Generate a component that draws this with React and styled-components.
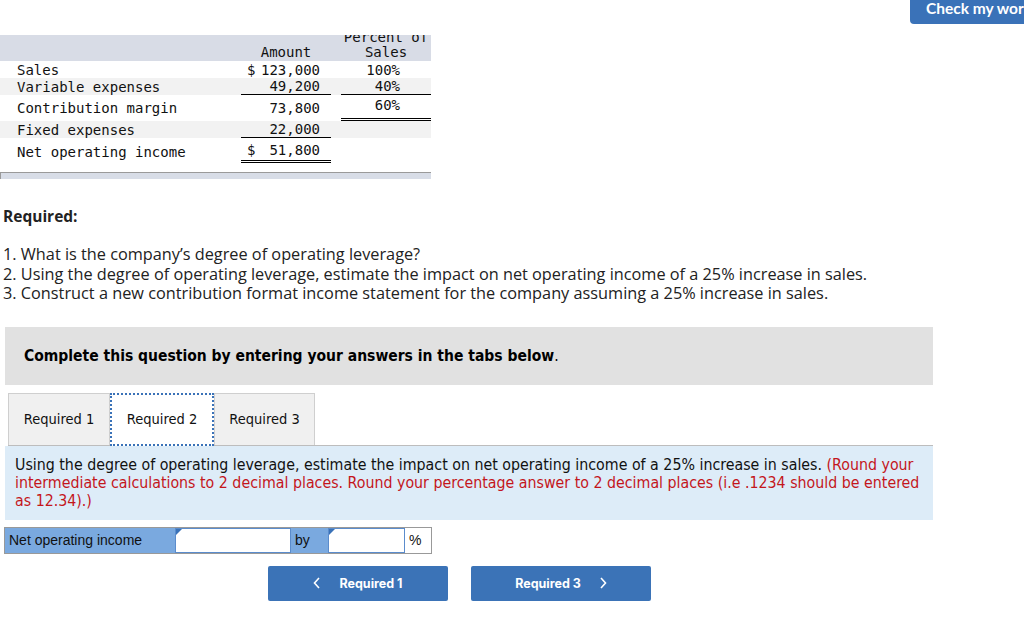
import React from "react"
import styled, { createGlobalStyle } from "styled-components"

const Global = createGlobalStyle`
  body {
    margin: 0;
    background: #fff;
    font-family: "Open Sans", "Liberation Sans", sans-serif;
    color: #222;
  }
`

const Page = styled.div`
  position: relative;
  width: 1024px;
  height: 617px;
  overflow: hidden;
`

const CheckButton = styled.button`
  position: absolute;
  top: -8px;
  left: 910px;
  width: 140px;
  height: 32px;
  border: none;
  border-radius: 4px;
  background: #3a72b8;
  color: #fff;
  font-family: Lato, "Liberation Sans", sans-serif;
  font-weight: 700;
  font-size: 15.5px;
  text-align: left;
  padding: 0 0 0 16px;
  white-space: nowrap;
`

const TableClip = styled.div`
  margin-top: 35px;
  width: 431px;
  overflow: hidden;
  font-family: "DejaVu Sans Mono", monospace;
  font-size: 14px;
  color: #111;
`

const Row = styled.div`
  display: grid;
  grid-template-columns: 241px 90px 10px 90px;
  height: ${p => p.h}px;
  background: ${p => (p.shade ? "#f2f2f2" : "#fff")};
`

const HeadRow = styled(Row)`
  margin-top: -8px;
  background: #d8dce6;
`

const HeadCell = styled.div`
  display: flex;
  flex-direction: column;
  justify-content: flex-end;
  align-items: center;
  line-height: 15px;
  padding-bottom: 1px;
`

const Label = styled.div`
  display: flex;
  align-items: center;
  padding-left: 17px;
  padding-top: ${p => p.pt || 0}px;
`

const Amount = styled.div`
  display: flex;
  align-items: center;
  justify-content: ${p => (p.dollar ? "space-between" : "flex-end")};
  padding: ${p => p.pt || 0}px 11px 0 6px;
  border-bottom: ${p =>
    p.line === "double" ? "3px double #000" : p.line ? "1px solid #000" : "none"};
`

const Percent = styled.div`
  display: flex;
  align-items: center;
  justify-content: flex-end;
  padding-right: 31px;
  padding-bottom: ${p => p.pb || 0}px;
  border-bottom: ${p =>
    p.line === "double" ? "3px double #000" : p.line ? "1px solid #000" : "none"};
`

const FootBar = styled.div`
  margin-top: 9px;
  width: 430px;
  height: 6px;
  background: #d8dde7;
  border-top: 1px solid #9a9a9a;
  border-left: 1px solid #9a9a9a;
`

const Required = styled.h3`
  margin: 26px 0 0 3px;
  font-family: "Open Sans", "Liberation Sans", sans-serif;
  font-size: 15.5px;
  font-weight: 700;
  color: #222;
`

const Questions = styled.div`
  margin: 18px 0 0 3px;
  font-size: 16.3px;
  line-height: 19.5px;
  color: #222;
`

const Notice = styled.div`
  margin: 23px 0 0 5px;
  width: 928px;
  height: 58px;
  background: #e1e1e1;
  display: flex;
  align-items: center;
  padding-left: 19px;
  box-sizing: border-box;
  font-family: "DejaVu Sans Condensed", "DejaVu Sans", sans-serif;
  font-stretch: condensed;
  font-size: 15.5px;
  color: #000;
  b {
    font-weight: 700;
  }
`

const Tabs = styled.div`
  display: flex;
  margin: 8px 0 0 8px;
  width: 925px;
  height: 53px;
  border-bottom: 1px solid #bdbdbd;
  box-sizing: border-box;
`

const Tab = styled.div`
  width: ${p => p.w}px;
  box-sizing: border-box;
  display: flex;
  align-items: center;
  justify-content: center;
  font-family: "DejaVu Sans Condensed", "DejaVu Sans", sans-serif;
  font-stretch: condensed;
  font-size: 14.5px;
  color: #111;
  background: ${p => (p.active ? "#fff" : "#f0f0f0")};
  border: ${p => (p.active ? "2px dotted #3a72b8" : "1px solid #cfcfcf")};
  border-bottom: ${p => (p.active ? "2px dotted #3a72b8" : "none")};
  margin-bottom: ${p => (p.active ? "-1px" : "0")};
`

const Panel = styled.div`
  margin-left: 5px;
  width: 928px;
  box-sizing: border-box;
  background: #ddecf8;
  padding: 10px 10px 10px 10px;
  font-family: "DejaVu Sans Condensed", "DejaVu Sans", sans-serif;
  font-stretch: condensed;
  font-size: 15.8px;
  line-height: 18px;
  color: #111;
`

const Red = styled.span`
  color: #c4161c;
`

const AnswerRow = styled.div`
  display: flex;
  margin: 7px 0 0 4px;
  width: 428px;
  height: 27px;
  border: 1px solid #999;
  box-sizing: border-box;
  font-family: "Liberation Sans", Arial, sans-serif;
  font-size: 14px;
  color: #111;
`

const Cell = styled.div`
  width: ${p => p.w}px;
  display: flex;
  align-items: center;
  padding-left: 4px;
  box-sizing: border-box;
  background: ${p => (p.blue ? "#7aa9df" : "#fff")};
`

const Field = styled.div`
  position: relative;
  width: ${p => p.w}px;
  background: #fff;
  border: 1px solid #5b8ccc;
  box-sizing: border-box;
  &::before {
    content: "";
    position: absolute;
    top: 0;
    left: 0;
    border-top: 6px solid #3a72b8;
    border-right: 6px solid transparent;
  }
`

const NavRow = styled.div`
  display: flex;
  gap: 23px;
  margin: 12px 0 0 268px;
`

const NavButton = styled.button`
  width: 180px;
  height: 35px;
  border: none;
  border-radius: 2px;
  background: #3b73b7;
  color: #fff;
  font-family: Inter, "Liberation Sans", sans-serif;
  font-weight: 700;
  font-size: 12.5px;
  display: flex;
  align-items: center;
  justify-content: center;
  gap: 18px;
`

const Chevron = ({ dir }) => (
  <svg width="8" height="12" viewBox="0 0 8 12" fill="none" stroke="#fff" strokeWidth="1.6">
    {dir === "left" ? <path d="M6 1 L1.5 6 L6 11" /> : <path d="M2 1 L6.5 6 L2 11" />}
  </svg>
)

export default function App() {
  return (
    <Page>
      <Global />
      <CheckButton>Check my work</CheckButton>

      <TableClip>
        <HeadRow h={34}>
          <div />
          <HeadCell>Amount</HeadCell>
          <div />
          <HeadCell>
            <span>Percent of</span>
            <span>Sales</span>
          </HeadCell>
        </HeadRow>
        <Row h={17}>
          <Label>Sales</Label>
          <Amount dollar>
            <span>$</span>
            <span>123,000</span>
          </Amount>
          <div />
          <Percent>100%</Percent>
        </Row>
        <Row h={17} shade>
          <Label>Variable expenses</Label>
          <Amount line="single">49,200</Amount>
          <div />
          <Percent line="single">40%</Percent>
        </Row>
        <Row h={26}>
          <Label>Contribution margin</Label>
          <Amount>73,800</Amount>
          <div />
          <Percent line="double" pb={4}>60%</Percent>
        </Row>
        <Row h={17} shade>
          <Label>Fixed expenses</Label>
          <Amount line="single">22,000</Amount>
          <div />
          <div />
        </Row>
        <Row h={25}>
          <Label pt={3}>Net operating income</Label>
          <Amount line="double" pt={1} dollar>
            <span>$</span>
            <span>51,800</span>
          </Amount>
          <div />
          <div />
        </Row>
      </TableClip>
      <FootBar />

      <Required>Required:</Required>
      <Questions>
        <div>1. What is the company’s degree of operating leverage?</div>
        <div>
          2. Using the degree of operating leverage, estimate the impact on net operating income of a 25%
          increase in sales.
        </div>
        <div>
          3. Construct a new contribution format income statement for the company assuming a 25% increase
          in sales.
        </div>
      </Questions>

      <Notice>
        <span>
          <b>Complete this question by entering your answers in the tabs below</b>.
        </span>
      </Notice>

      <Tabs>
        <Tab w={102}>Required 1</Tab>
        <Tab w={104} active>
          Required 2
        </Tab>
        <Tab w={101}>Required 3</Tab>
      </Tabs>

      <Panel>
        Using the degree of operating leverage, estimate the impact on net operating income of a 25% increase in
        sales.{" "}
        <Red>
          (Round your intermediate calculations to 2 decimal places. Round your percentage answer to 2 decimal
          places (i.e .1234 should be entered as 12.34).)
        </Red>
      </Panel>

      <AnswerRow>
        <Cell w={170} blue>
          Net operating income
        </Cell>
        <Field w={116} />
        <Cell w={37} blue>
          by
        </Cell>
        <Field w={77} />
        <Cell w={26}>%</Cell>
      </AnswerRow>

      <NavRow>
        <NavButton>
          <Chevron dir="left" />
          Required 1
        </NavButton>
        <NavButton>
          Required 3
          <Chevron dir="right" />
        </NavButton>
      </NavRow>
    </Page>
  )
}
